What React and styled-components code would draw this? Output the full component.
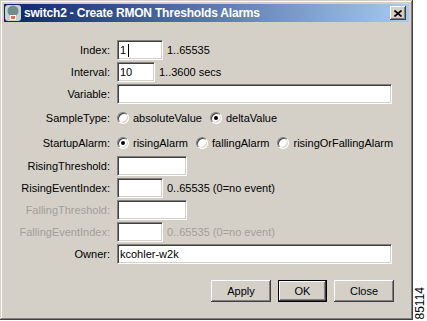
import styled, { createGlobalStyle } from "styled-components";

const GlobalStyle = createGlobalStyle`
  html, body {
    margin: 0;
    padding: 0;
    background: #fff;
  }
  body {
    font-family: "Liberation Sans", Arial, sans-serif;
    font-size: 11px;
    color: #000;
  }
`;

const Page = styled.div`
  display: flex;
  width: 427px;
  height: 321px;
`;

const Window = styled.div`
  width: 414px;
  height: 320px;
  box-sizing: border-box;
  padding: 4px;
  background: #d4d0c8;
  box-shadow: inset -1px -1px #404040, inset 1px 1px #d4d0c8,
    inset -2px -2px #808080, inset 2px 2px #fff;
  display: flex;
  flex-direction: column;
`;

const TitleBar = styled.div`
  height: 18px;
  flex: none;
  display: flex;
  align-items: center;
  gap: 3px;
  padding: 0 3px 0 1px;
  background: linear-gradient(to right, #0a246a, #a6caf0);
  color: #fff;
  font-weight: bold;
  font-size: 12px;
  letter-spacing: -0.2px;
  white-space: nowrap;
`;

const TitleText = styled.span`
  flex: 1;
`;

const CloseBox = styled.div`
  width: 16px;
  height: 14px;
  box-sizing: border-box;
  background: #d4d0c8;
  box-shadow: inset -1px -1px #404040, inset 1px 1px #fff,
    inset -2px -2px #808080;
  display: flex;
  align-items: center;
  justify-content: center;
`;

const Form = styled.div`
  display: flex;
  flex-direction: column;
  gap: 2px;
  padding: 18px 15px 0 4px;
`;

const Row = styled.div`
  display: flex;
  align-items: center;
  height: ${(p) => (p.$radio ? "23px" : "20px")};
`;

const Label = styled.span`
  width: 102px;
  margin-right: 7px;
  text-align: right;
  white-space: nowrap;
  color: ${(p) => (p.$disabled ? "#a19f98" : "#000")};
`;

const Field = styled.div`
  width: ${(p) => p.$w}px;
  height: 20px;
  box-sizing: border-box;
  background: #fff;
  border-style: solid;
  border-width: 1px;
  border-color: #808080 #fff #fff #808080;
  box-shadow: inset 1px 1px #404040, inset -1px -1px #d4d0c8;
  padding: 0 2px;
  display: flex;
  align-items: center;
  font-size: 11px;
  white-space: nowrap;
`;

const Caret = styled.span`
  width: 1px;
  height: 13px;
  margin-left: 2px;
  background: #000;
`;

const Hint = styled.span`
  margin-left: 4px;
  white-space: nowrap;
  color: ${(p) => (p.$disabled ? "#a19f98" : "#000")};
`;

const RadioGroup = styled.div`
  display: flex;
  align-items: center;
  gap: 8px;
`;

const RadioOption = styled.label`
  display: flex;
  align-items: center;
  gap: 4px;
  white-space: nowrap;
`;

const RadioCircle = styled.span`
  width: 12px;
  height: 12px;
  box-sizing: border-box;
  flex: none;
  border-radius: 50%;
  background: #fff;
  border: 1px solid;
  border-color: #808080 #fff #fff #808080;
  box-shadow: inset 1px 1px #404040, inset -1px -1px #d4d0c8;
  position: relative;

  &::after {
    content: "";
    display: ${(p) => (p.$checked ? "block" : "none")};
    position: absolute;
    left: 3px;
    top: 3px;
    width: 4px;
    height: 4px;
    border-radius: 50%;
    background: #000;
  }
`;

const ButtonBar = styled.div`
  display: flex;
  justify-content: flex-end;
  gap: 7px;
  margin-top: 14px;
`;

const Button = styled.button`
  width: ${(p) => p.$w}px;
  height: 22px;
  box-sizing: border-box;
  background: #d4d0c8;
  border: ${(p) => (p.$default ? "1px solid #000" : "none")};
  box-shadow: inset -1px -1px #404040, inset 1px 1px #fff,
    inset -2px -2px #808080;
  font-family: "Liberation Sans", Arial, sans-serif;
  font-size: 11px;
  color: #000;
  padding: 0;
`;

const Side = styled.div`
  flex: 1;
  display: flex;
  align-items: flex-end;
  justify-content: center;
  padding-bottom: 2px;
`;

const Stamp = styled.span`
  writing-mode: vertical-rl;
  transform: rotate(180deg);
  font-size: 12px;
  color: #000;
`;

function AppIcon() {
  return (
    <svg width="16" height="16" viewBox="0 0 16 16">
      <rect x="0" y="0" width="16" height="16" rx="3" fill="#c7d2d0" />
      <circle cx="8" cy="6" r="5.5" fill="#6f8e8a" />
      <rect x="5" y="10" width="6" height="5" fill="#fff" />
      <rect x="6" y="11" width="4" height="3" fill="#e0705a" />
    </svg>
  );
}

function CloseIcon() {
  return (
    <svg width="8" height="7" viewBox="0 0 8 7">
      <path d="M0.5 0.5 L7.5 6.5 M7.5 0.5 L0.5 6.5" stroke="#000" strokeWidth="1.6" />
    </svg>
  );
}

function Radio({ checked, children }) {
  return (
    <RadioOption>
      <RadioCircle $checked={checked} />
      {children}
    </RadioOption>
  );
}

export default function App() {
  return (
    <Page>
      <GlobalStyle />
      <Window>
        <TitleBar>
          <AppIcon />
          <TitleText>switch2 - Create RMON Thresholds Alarms</TitleText>
          <CloseBox>
            <CloseIcon />
          </CloseBox>
        </TitleBar>
        <Form>
          <Row>
            <Label>Index:</Label>
            <Field $w={46}>
              1<Caret />
            </Field>
            <Hint>1..65535</Hint>
          </Row>
          <Row>
            <Label>Interval:</Label>
            <Field $w={38}>10</Field>
            <Hint>1..3600 secs</Hint>
          </Row>
          <Row>
            <Label>Variable:</Label>
            <Field $w={275} />
          </Row>
          <Row $radio>
            <Label>SampleType:</Label>
            <RadioGroup>
              <Radio>absoluteValue</Radio>
              <Radio checked>deltaValue</Radio>
            </RadioGroup>
          </Row>
          <Row $radio>
            <Label>StartupAlarm:</Label>
            <RadioGroup>
              <Radio checked>risingAlarm</Radio>
              <Radio>fallingAlarm</Radio>
              <Radio>risingOrFallingAlarm</Radio>
            </RadioGroup>
          </Row>
          <Row>
            <Label>RisingThreshold:</Label>
            <Field $w={70} />
          </Row>
          <Row>
            <Label>RisingEventIndex:</Label>
            <Field $w={46} />
            <Hint>0..65535 (0=no event)</Hint>
          </Row>
          <Row>
            <Label $disabled>FallingThreshold:</Label>
            <Field $w={70} />
          </Row>
          <Row>
            <Label $disabled>FallingEventIndex:</Label>
            <Field $w={46} />
            <Hint $disabled>0..65535 (0=no event)</Hint>
          </Row>
          <Row>
            <Label>Owner:</Label>
            <Field $w={275}>kcohler-w2k</Field>
          </Row>
          <ButtonBar>
            <Button $w={60}>Apply</Button>
            <Button $w={49} $default>
              OK
            </Button>
            <Button $w={60}>Close</Button>
          </ButtonBar>
        </Form>
      </Window>
      <Side>
        <Stamp>85114</Stamp>
      </Side>
    </Page>
  );
}
